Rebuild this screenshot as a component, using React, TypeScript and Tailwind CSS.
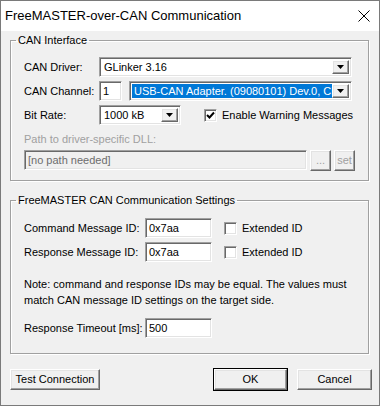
import React from 'react';

const font = { fontFamily: '"Liberation Sans", Arial, sans-serif' };

const sunken =
  'border border-t-[#a0a0a0] border-l-[#a0a0a0] border-b-white border-r-white shadow-[inset_1px_1px_0_#696969,inset_-1px_-1px_0_#e3e3e3]';
const raised =
  'border border-t-white border-l-white border-b-[#696969] border-r-[#696969] shadow-[inset_-1px_-1px_0_#a0a0a0,inset_1px_1px_0_#e3e3e3] bg-[#f0f0f0]';

function DropButton() {
  return (
    <div className={`flex h-full w-[17px] shrink-0 items-center justify-center ${raised}`}>
      <svg width="7" height="4" viewBox="0 0 7 4">
        <path d="M0 0h7L3.5 4z" fill="#000" />
      </svg>
    </div>
  );
}

function Combo({ value, width, selected }: { value: string; width: string; selected?: boolean }) {
  return (
    <div className={`flex h-[20px] ${width} items-stretch bg-white p-[2px] ${sunken}`}>
      <div
        className={`flex min-w-0 flex-1 items-center overflow-hidden whitespace-nowrap pl-[2px] ${
          selected ? 'bg-[#0078d7] text-white' : 'text-black'
        }`}
      >
        {value}
      </div>
      <DropButton />
    </div>
  );
}

function TextBox({ value, width, disabled }: { value: string; width: string; disabled?: boolean }) {
  return (
    <div
      className={`flex h-[20px] ${width} items-center overflow-hidden whitespace-nowrap pl-[3px] ${sunken} ${
        disabled ? 'bg-[#f0f0f0] text-[#6d6d6d]' : 'bg-white text-black'
      }`}
    >
      {value}
    </div>
  );
}

function CheckBox({ checked, label }: { checked?: boolean; label: string }) {
  return (
    <div className="flex items-center gap-[5px]">
      <div className={`flex h-[13px] w-[13px] items-center justify-center bg-white ${sunken}`}>
        {checked && (
          <svg width="9" height="9" viewBox="0 0 9 9">
            <path d="M1 4l2.5 2.5L8 1.5" stroke="#000" strokeWidth="2" fill="none" />
          </svg>
        )}
      </div>
      <span>{label}</span>
    </div>
  );
}

function Button({ label, width, isDefault, disabled }: { label: string; width: string; isDefault?: boolean; disabled?: boolean }) {
  return (
    <div className={`${isDefault ? 'border border-black' : ''}`}>
      <div
        className={`flex h-[21px] ${width} items-center justify-center ${raised} ${
          disabled ? 'text-[#a0a0a0]' : 'text-black'
        }`}
      >
        {label}
      </div>
    </div>
  );
}

function Group({ title, children, className }: { title: string; children: React.ReactNode; className?: string }) {
  return (
    <fieldset
      className={`ml-[9px] w-[359px] border border-[#a0a0a0] shadow-[1px_1px_0_white,inset_1px_1px_0_white] ${className ?? ''}`}
    >
      <legend className="ml-[5px] px-[2px] leading-[14px]">{title}</legend>
      {children}
    </fieldset>
  );
}

export default function App() {
  return (
    <div
      className="flex h-[406px] w-[380px] flex-col border border-[#7a7a7a] bg-[#f0f0f0] text-[11px] text-black"
      style={font}
    >
      {/* Title bar */}
      <div className="flex h-[30px] shrink-0 items-center justify-between bg-white pl-[4px] pr-[9px]">
        <span className="text-[13px]">FreeMASTER-over-CAN Communication</span>
        <svg width="12" height="12" viewBox="0 0 12 12">
          <path d="M0.5 0.5l11 11M11.5 0.5l-11 11" stroke="#000" strokeWidth="1" />
        </svg>
      </div>

      {/* CAN Interface */}
      <Group title="CAN Interface" className="mt-[2px] h-[148px]">
        <div className="flex flex-col pl-[13px] pt-[10px]">
          <div className="flex h-[20px] items-center">
            <span className="w-[75px]">CAN Driver:</span>
            <Combo value="GLinker 3.16" width="w-[253px]" />
          </div>
          <div className="mt-[4px] flex h-[20px] items-center">
            <span className="w-[75px]">CAN Channel:</span>
            <TextBox value="1" width="w-[23px]" />
            <div className="w-[7px]" />
            <Combo value="USB-CAN Adapter. (09080101) Dev.0, Ch0" width="w-[223px]" selected />
          </div>
          <div className="mt-[4px] flex h-[20px] items-center">
            <span className="w-[75px]">Bit Rate:</span>
            <Combo value="1000 kB" width="w-[82px]" />
            <div className="ml-[23px]">
              <CheckBox checked label="Enable Warning Messages" />
            </div>
          </div>
          <div className="mt-[7px] leading-[14px] text-[#a0a0a0]">Path to driver-specific DLL:</div>
          <div className="mt-[4px] flex h-[20px] items-center">
            <TextBox value="[no path needed]" width="w-[283px]" disabled />
            <div className="ml-[3px]">
              <Button label="..." width="w-[21px]" disabled />
            </div>
            <div className="ml-[3px]">
              <Button label="set" width="w-[21px]" disabled />
            </div>
          </div>
        </div>
      </Group>

      {/* FreeMASTER CAN Communication Settings */}
      <Group title="FreeMASTER CAN Communication Settings" className="mt-[12px] h-[161px]">
        <div className="flex flex-col pl-[13px] pt-[11px]">
          <div className="flex h-[20px] items-center">
            <span className="w-[121px]">Command Message ID:</span>
            <TextBox value="0x7aa" width="w-[67px]" />
            <div className="ml-[12px]">
              <CheckBox label="Extended ID" />
            </div>
          </div>
          <div className="mt-[4px] flex h-[20px] items-center">
            <span className="w-[121px]">Response Message ID:</span>
            <TextBox value="0x7aa" width="w-[67px]" />
            <div className="ml-[12px]">
              <CheckBox label="Extended ID" />
            </div>
          </div>
          <p className="mt-[14px] leading-[16px]">
            Note: command and response IDs may be equal. The values must
            <br />
            match CAN message ID settings on the target side.
          </p>
          <div className="mt-[10px] flex h-[20px] items-center">
            <span className="w-[121px]">Response Timeout [ms]:</span>
            <TextBox value="500" width="w-[67px]" />
          </div>
        </div>
      </Group>

      {/* Buttons */}
      <div className="mt-[14px] flex items-center pl-[9px]">
        <Button label="Test Connection" width="w-[90px]" />
        <div className="ml-[113px]">
          <Button label="OK" width="w-[73px]" isDefault />
        </div>
        <div className="ml-[9px]">
          <Button label="Cancel" width="w-[75px]" />
        </div>
      </div>
    </div>
  );
}
